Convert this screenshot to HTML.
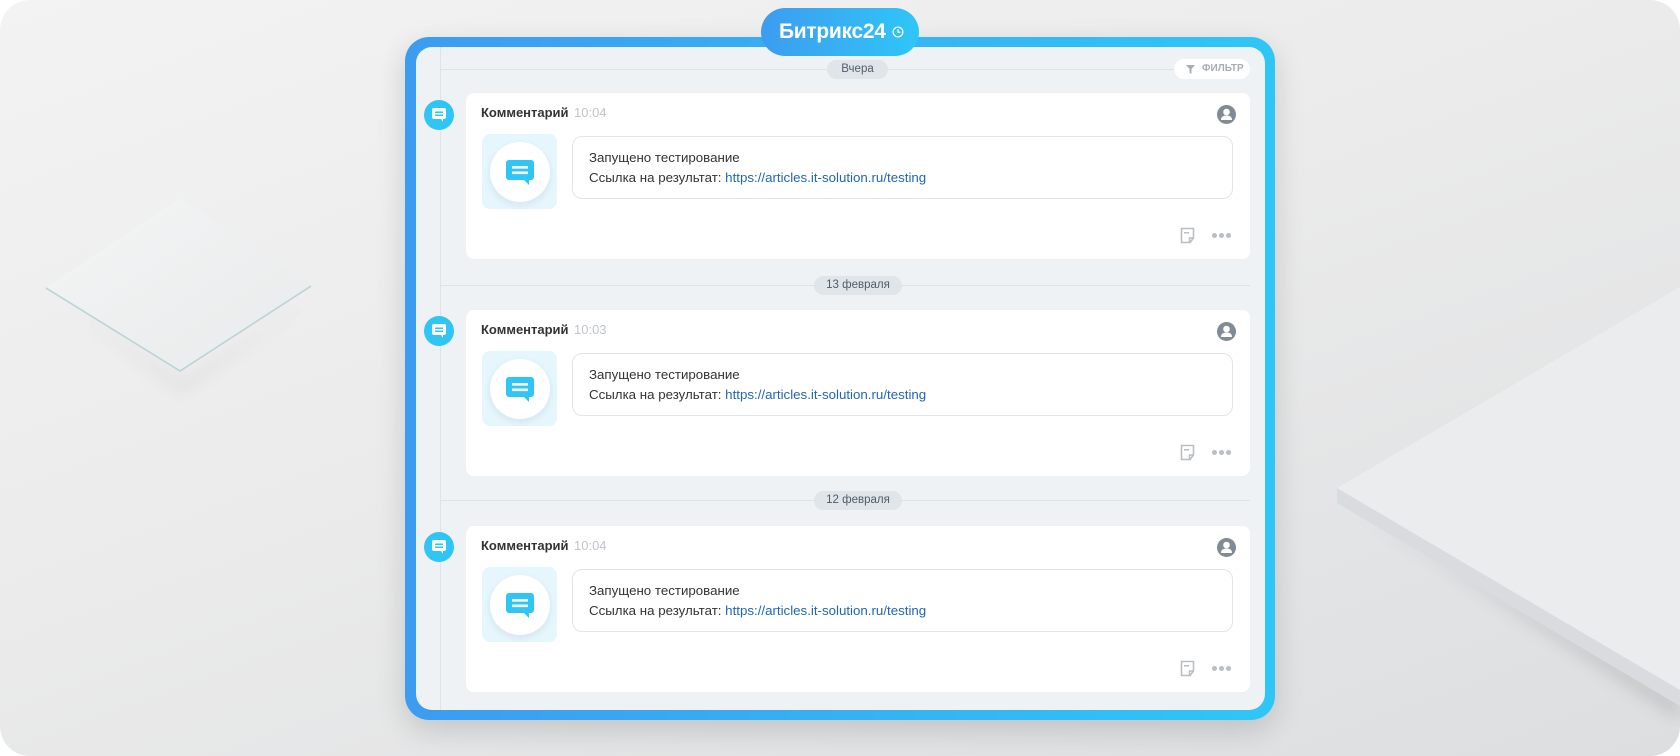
<!DOCTYPE html>
<html><head><meta charset="utf-8"><style>
*{margin:0;padding:0;box-sizing:border-box}
body{width:1680px;height:756px;overflow:hidden;background:#fff;font-family:"Liberation Sans",Arial,sans-serif}
.bg{position:absolute;left:0;top:0;width:1680px;height:756px;border-radius:30px;background:linear-gradient(160deg,#f3f3f3 0%,#ebebeb 45%,#dcdee0 100%);overflow:hidden}
.frame{position:absolute;left:405px;top:37px;width:870px;height:683px;border-radius:24px;background:linear-gradient(90deg,#3d9cf0,#2fc6f7);box-shadow:0 10px 30px rgba(0,0,0,.15)}
.inner{position:absolute;left:11px;top:10px;right:10px;bottom:10px;border-radius:16px;background:#eef2f4;overflow:hidden}
.logo{position:absolute;left:761px;top:8px;width:158px;height:48px;border-radius:24px;background:linear-gradient(90deg,#3d9cf0,#2fc6f7);color:#fff;font-size:21px;font-weight:bold;line-height:48px;padding-left:18px;letter-spacing:-0.3px}
.logo svg{position:absolute;left:131px;top:18px}
.vline{position:absolute;left:440px;top:47px;width:1px;height:663px;background:#dfe3e6}
.hline{position:absolute;left:440px;width:810px;height:1px;background:#dfe3e6}
.pill{position:absolute;height:19px;border-radius:10px;background:#dfe5e8;color:#525c69;font-size:11.5px;line-height:19px;text-align:center}
.filter{position:absolute;left:1174px;top:59px;width:76px;height:20px;border-radius:10px;background:#fff;color:#a8adb4;font-size:10px;font-weight:bold;line-height:20px;padding-left:28px}
.card{position:absolute;left:466px;width:784px;height:166px;background:#fff;border-radius:8px}
.dot{position:absolute;left:424px;width:30px;height:30px;border-radius:50%;background:#2fc6f6}
.dot svg{position:absolute;left:8px;top:8px}
.title{position:absolute;left:15px;top:12px;font-size:13px;font-weight:bold;color:#333}
.time{position:absolute;left:108px;top:12px;font-size:13px;color:#c0c4c9}
.thumb{position:absolute;left:16px;top:41px;width:75px;height:75px;border-radius:8px;background:#e5f7fd}
.circ{position:absolute;left:8px;top:8px;width:60px;height:60px;border-radius:50%;background:#fff;box-shadow:0 3px 8px rgba(0,0,0,.08)}
.circ svg{position:absolute;left:16px;top:18px}
.box{position:absolute;left:106px;top:43px;width:661px;height:63px;border:1px solid #e2e5e8;border-radius:10px;font-size:13.3px;color:#333;line-height:20px;padding:11px 0 0 16px}
.box a{color:#2067b0;text-decoration:none}
.av{position:absolute;left:751px;top:12px;width:19px;height:19px;border-radius:50%;background:#828b95;overflow:hidden}
.note{position:absolute;left:713px;top:134px}
.dots{position:absolute;left:746px;top:140px;display:flex;gap:2px}
.dots i{display:block;width:5px;height:5px;border-radius:50%;background:#b9bec4}
</style></head><body>
<div class="bg">
<svg width="1680" height="756" style="position:absolute;left:0;top:0">
<defs><filter id="sh" x="-30%" y="-30%" width="160%" height="160%"><feGaussianBlur stdDeviation="8"/></filter>
<linearGradient id="lp" x1="0" y1="0" x2="1" y2="1"><stop offset="0" stop-color="#f4f5f5"/><stop offset="1" stop-color="#e8eaeb"/></linearGradient></defs>
<polygon points="60,300 182,385 310,300 182,390" fill="rgba(0,0,0,.12)" filter="url(#sh)"/>
<polygon points="46,287 46,289 180,372 311,287 311,285 180,370" fill="#bcd3d7"/>
<polygon points="46,287 180,198 311,285 180,370" fill="url(#lp)"/>
<polygon points="1350,505 1680,720 1680,700" fill="rgba(0,0,0,.12)" filter="url(#sh)"/>
<polygon points="1337,488 1337,503 1680,706 1680,690" fill="#d8dcdf"/>
<polygon points="1337,488 1680,287 1680,690" fill="#eaeced"/>
</svg>
</div>
<div class="frame"><div class="inner"></div></div>
<div class="logo">Битрикс24<svg width="12" height="12" viewBox="0 0 13 13"><circle cx="6.5" cy="6.5" r="5.3" fill="none" stroke="#fff" stroke-width="1.3"/><path d="M6.5 3.5V6.8H9" fill="none" stroke="#fff" stroke-width="1.3"/></svg></div>
<div class="vline"></div>
<div class="hline" style="top:69px"></div>
<div class="pill" style="left:827px;top:60px;width:61px">Вчера</div>
<div class="filter"><svg style="position:absolute;left:12px;top:6px" width="9" height="9" viewBox="0 0 9 9"><path d="M0 0H9L5.5 4V9L3.5 7.5V4Z" fill="#a8adb4"/></svg>ФИЛЬТР</div>
<div class="hline" style="top:285px"></div>
<div class="pill" style="left:814px;top:276px;width:88px">13 февраля</div>
<div class="hline" style="top:500px"></div>
<div class="pill" style="left:814px;top:491px;width:88px">12 февраля</div>

<div class="dot" style="top:100px"><svg width="14" height="14" viewBox="0 0 14 14"><rect x="0" y="0" width="14" height="11" rx="2" fill="#fff"/><path d="M9 11L11 14V11Z" fill="#fff"/><rect x="3" y="3.5" width="8" height="1.5" fill="#2fc6f6"/><rect x="3" y="6.5" width="8" height="1.5" fill="#2fc6f6"/></svg></div>
<div class="card" style="top:93px">
<div class="title">Комментарий</div><div class="time">10:04</div>
<div class="thumb"><div class="circ"><svg width="28" height="26" viewBox="0 0 28 26"><rect x="0" y="0" width="28" height="20" rx="3" fill="#2fc6f6"/><path d="M18 20L23 25V20Z" fill="#2fc6f6"/><rect x="6" y="6" width="16" height="2.6" fill="#fff"/><rect x="6" y="11.5" width="16" height="2.6" fill="#fff"/></svg></div></div>
<div class="box">Запущено тестирование<br>Ссылка на результат: <a>https://articles.it-solution.ru/testing</a></div>
<div class="av"><svg width="19" height="19" viewBox="0 0 19 19"><circle cx="9.5" cy="7" r="3.3" fill="#fff"/><path d="M4 15C4 11.5 6.5 10.5 9.5 10.5S15 11.5 15 15Z" fill="#fff"/></svg></div>
<svg class="note" width="17" height="17" viewBox="0 0 17 17"><path d="M2.5 1.5H14.5V11L11 15.5H2.5Z" fill="none" stroke="#b9bec4" stroke-width="1.6"/><path d="M10.5 15.5V11H14.5" fill="none" stroke="#b9bec4" stroke-width="1.6"/><rect x="5" y="5" width="5" height="1.5" fill="#b9bec4"/></svg>
<div class="dots"><i></i><i></i><i></i></div>
</div>

<div class="dot" style="top:316px"><svg width="14" height="14" viewBox="0 0 14 14"><rect x="0" y="0" width="14" height="11" rx="2" fill="#fff"/><path d="M9 11L11 14V11Z" fill="#fff"/><rect x="3" y="3.5" width="8" height="1.5" fill="#2fc6f6"/><rect x="3" y="6.5" width="8" height="1.5" fill="#2fc6f6"/></svg></div>
<div class="card" style="top:310px">
<div class="title">Комментарий</div><div class="time">10:03</div>
<div class="thumb"><div class="circ"><svg width="28" height="26" viewBox="0 0 28 26"><rect x="0" y="0" width="28" height="20" rx="3" fill="#2fc6f6"/><path d="M18 20L23 25V20Z" fill="#2fc6f6"/><rect x="6" y="6" width="16" height="2.6" fill="#fff"/><rect x="6" y="11.5" width="16" height="2.6" fill="#fff"/></svg></div></div>
<div class="box">Запущено тестирование<br>Ссылка на результат: <a>https://articles.it-solution.ru/testing</a></div>
<div class="av"><svg width="19" height="19" viewBox="0 0 19 19"><circle cx="9.5" cy="7" r="3.3" fill="#fff"/><path d="M4 15C4 11.5 6.5 10.5 9.5 10.5S15 11.5 15 15Z" fill="#fff"/></svg></div>
<svg class="note" width="17" height="17" viewBox="0 0 17 17"><path d="M2.5 1.5H14.5V11L11 15.5H2.5Z" fill="none" stroke="#b9bec4" stroke-width="1.6"/><path d="M10.5 15.5V11H14.5" fill="none" stroke="#b9bec4" stroke-width="1.6"/><rect x="5" y="5" width="5" height="1.5" fill="#b9bec4"/></svg>
<div class="dots"><i></i><i></i><i></i></div>
</div>

<div class="dot" style="top:532px"><svg width="14" height="14" viewBox="0 0 14 14"><rect x="0" y="0" width="14" height="11" rx="2" fill="#fff"/><path d="M9 11L11 14V11Z" fill="#fff"/><rect x="3" y="3.5" width="8" height="1.5" fill="#2fc6f6"/><rect x="3" y="6.5" width="8" height="1.5" fill="#2fc6f6"/></svg></div>
<div class="card" style="top:526px">
<div class="title">Комментарий</div><div class="time">10:04</div>
<div class="thumb"><div class="circ"><svg width="28" height="26" viewBox="0 0 28 26"><rect x="0" y="0" width="28" height="20" rx="3" fill="#2fc6f6"/><path d="M18 20L23 25V20Z" fill="#2fc6f6"/><rect x="6" y="6" width="16" height="2.6" fill="#fff"/><rect x="6" y="11.5" width="16" height="2.6" fill="#fff"/></svg></div></div>
<div class="box">Запущено тестирование<br>Ссылка на результат: <a>https://articles.it-solution.ru/testing</a></div>
<div class="av"><svg width="19" height="19" viewBox="0 0 19 19"><circle cx="9.5" cy="7" r="3.3" fill="#fff"/><path d="M4 15C4 11.5 6.5 10.5 9.5 10.5S15 11.5 15 15Z" fill="#fff"/></svg></div>
<svg class="note" width="17" height="17" viewBox="0 0 17 17"><path d="M2.5 1.5H14.5V11L11 15.5H2.5Z" fill="none" stroke="#b9bec4" stroke-width="1.6"/><path d="M10.5 15.5V11H14.5" fill="none" stroke="#b9bec4" stroke-width="1.6"/><rect x="5" y="5" width="5" height="1.5" fill="#b9bec4"/></svg>
<div class="dots"><i></i><i></i><i></i></div>
</div>
</body></html>
